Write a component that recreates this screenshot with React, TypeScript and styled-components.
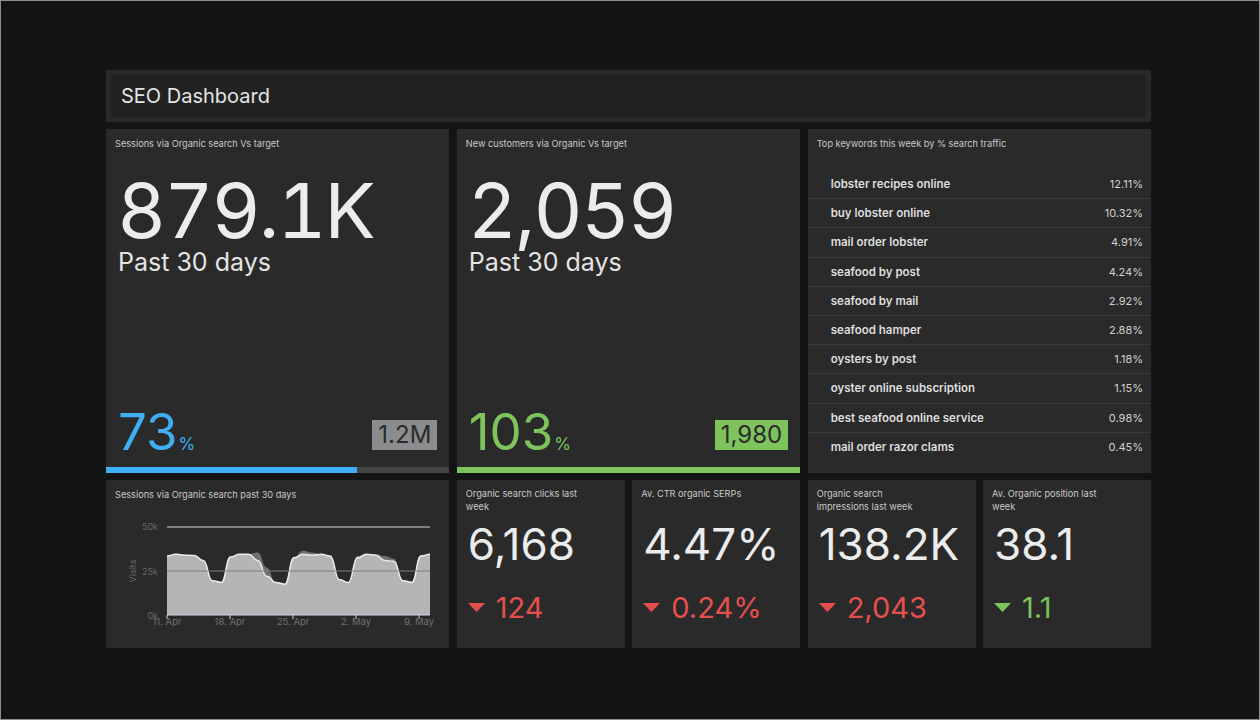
import React from "react";
import styled, { createGlobalStyle } from "styled-components";

const GlobalStyle = createGlobalStyle`
  html, body { margin: 0; padding: 0; background: #131416; }
  body { font-family: Inter, "Noto Sans", "Liberation Sans", sans-serif; }
  * { box-sizing: border-box; }
`;

const Frame = styled.div`
  width: 1260px;
  height: 720px;
  border: 1px solid #8e8e8e;
  background: #131416;
  padding: 69px 0 0 105px;
`;

const Board = styled.div`
  width: 1045px;
  display: grid;
  grid-template-columns: repeat(6, 1fr);
  grid-template-rows: 52px 344px 168px;
  gap: 7px 7.5px;
`;

const Header = styled.div`
  grid-column: 1 / -1;
  background: #292929;
  padding: 5px;
  display: flex;
`;

const HeaderInner = styled.div`
  flex: 1;
  background: #222222;
  display: flex;
  align-items: center;
  padding-left: 10px;
  font-size: 20px;
  color: #e4e4e4;
`;

const Card = styled.div<{ $span: number }>`
  grid-column: span ${(p) => p.$span};
  background: #2a2a2a;
  display: flex;
  flex-direction: column;
  padding-top: 8px;
  overflow: hidden;
`;

const Label = styled.div`
  font-size: 9.2px;
  line-height: 13px;
  color: #c9c9c9;
  padding: 0 9px;
`;

const BigValue = styled.div`
  font-size: 76px;
  line-height: 1;
  margin-top: 22px;
  padding-left: 11px;
  color: #ececec;
  font-variant-numeric: tabular-nums;
  letter-spacing: -2px;
`;

const Sub = styled.div`
  font-size: 25px;
  line-height: 1;
  margin-top: 2px;
  padding-left: 12px;
  color: #e4e4e4;
`;

const Spacer = styled.div`
  flex: 1;
`;

const BottomRow = styled.div`
  display: flex;
  justify-content: space-between;
  align-items: flex-end;
  padding: 0 12px 10px 12px;
`;

const Pct = styled.div<{ $color: string }>`
  font-size: 51px;
  line-height: 1;
  color: ${(p) => p.$color};
  span {
    font-size: 17px;
    margin-left: 1px;
  }
`;

const Badge = styled.div<{ $bg: string }>`
  background: ${(p) => p.$bg};
  color: #2b2b2b;
  font-size: 24px;
  line-height: 30px;
  height: 30px;
  padding: 0 6px;
  margin-bottom: 7px;
`;

const Track = styled.div`
  height: 6px;
  background: #454545;
  display: flex;
`;

const Fill = styled.div<{ $color: string }>`
  height: 100%;
  background: ${(p) => p.$color};
`;

const KeywordList = styled.div`
  margin-top: 20px;
  display: flex;
  flex-direction: column;
`;

const KeywordRow = styled.div`
  height: 29.2px;
  display: flex;
  justify-content: space-between;
  align-items: center;
  padding: 0 8px 0 23px;
  border-bottom: 1px solid #3b3b3b;
  &:last-child {
    border-bottom: none;
  }
`;

const Keyword = styled.span`
  font-size: 11.5px;
  font-weight: 600;
  color: #dedede;
`;

const KeywordValue = styled.span`
  font-size: 11px;
  color: #d0d0d0;
`;

const ChartSvg = styled.svg`
  margin: 3px 0 0 9px;
  display: block;
`;

const SmallTitle = styled.div`
  font-size: 9.2px;
  line-height: 12.5px;
  height: 25px;
  max-width: 124px;
  color: #c9c9c9;
  padding-left: 9px;
`;

const SmallValue = styled.div`
  font-size: 44px;
  line-height: 1;
  margin-top: 9px;
  padding-left: 11px;
  color: #ececec;
`;

const Delta = styled.div<{ $color: string }>`
  display: flex;
  align-items: center;
  gap: 11px;
  margin-top: 27px;
  padding-left: 11px;
  font-size: 29px;
  line-height: 1;
  color: ${(p) => p.$color};
`;

const BLUE = "#3eaff4";
const GREEN = "#7ec35c";
const RED = "#e5504d";

const keywords: [string, string][] = [
  ["lobster recipes online", "12.11%"],
  ["buy lobster online", "10.32%"],
  ["mail order lobster", "4.91%"],
  ["seafood by post", "4.24%"],
  ["seafood by mail", "2.92%"],
  ["seafood hamper", "2.88%"],
  ["oysters by post", "1.18%"],
  ["oyster online subscription", "1.15%"],
  ["best seafood online service", "0.98%"],
  ["mail order razor clams", "0.45%"],
];

const mainData = [
  33.5, 34.5, 34, 33.8, 31, 19.5, 18.5, 33, 34.5, 34.5, 31, 22, 18.5, 17.5, 32.5,
  34.5, 34, 34.5, 33.5, 20, 18.5, 32.5, 34.5, 34, 31, 30.5, 19.5, 18.5, 33.5, 34.5,
];
const backData = [
  33.5, 35, 34, 33.8, 31, 19.5, 18.5, 33, 34.5, 34.5, 35.5, 27, 18.5, 17.5, 33,
  36.5, 35.5, 34.5, 33.5, 20, 18.5, 33.5, 34.5, 34.5, 33.5, 32, 19.5, 18.5, 33.5, 34.5,
];

const X0 = 52;
const DX = 9.07;
const yOf = (v: number) => 111 - (v / 50) * 88;

function linePath(data: number[]) {
  let d = `M ${X0} ${yOf(data[0]).toFixed(2)}`;
  for (let i = 1; i < data.length; i++) {
    const xa = X0 + (i - 1) * DX;
    const xb = X0 + i * DX;
    const ya = yOf(data[i - 1]);
    const yb = yOf(data[i]);
    d += ` C ${(xa + DX / 2).toFixed(2)} ${ya.toFixed(2)}, ${(xb - DX / 2).toFixed(2)} ${yb.toFixed(2)}, ${xb.toFixed(2)} ${yb.toFixed(2)}`;
  }
  return d;
}

function areaPath(data: number[]) {
  const end = X0 + (data.length - 1) * DX;
  return `${linePath(data)} L ${end.toFixed(2)} 111 L ${X0} 111 Z`;
}

const ticks = [
  { x: 52, label: "11. Apr" },
  { x: 115, label: "18. Apr" },
  { x: 178, label: "25. Apr" },
  { x: 241, label: "2. May" },
  { x: 304, label: "9. May" },
];

const Chart = () => (
  <ChartSvg width={326} height={130} viewBox="0 0 326 130">
    <line x1={52} x2={315} y1={23} y2={23} stroke="#d4d4d4" strokeWidth={1} />
    <path d={areaPath(backData)} fill="#6f6f6f" />
    <path d={areaPath(mainData)} fill="#b5b5b5" />
    <path d={linePath(mainData)} fill="none" stroke="#ececec" strokeWidth={1.5} />
    <line x1={52} x2={315} y1={67} y2={67} stroke="#7e7e7e" strokeWidth={1.2} />
    <line x1={52} x2={315} y1={111} y2={111} stroke="#ccd6eb" strokeWidth={1} />
    {ticks.map((t) => (
      <g key={t.label}>
        <line x1={t.x} x2={t.x} y1={111} y2={115} stroke="#ccd6eb" strokeWidth={1} />
        <text x={t.x} y={121} fontSize={9.5} fill="#707070" textAnchor="middle" fontFamily="Inter, sans-serif">
          {t.label}
        </text>
      </g>
    ))}
    <text x={43} y={26} fontSize={9} fill="#686868" textAnchor="end" fontFamily="Inter, sans-serif">50k</text>
    <text x={43} y={71} fontSize={9} fill="#686868" textAnchor="end" fontFamily="Inter, sans-serif">25k</text>
    <text x={43} y={115} fontSize={9} fill="#686868" textAnchor="end" fontFamily="Inter, sans-serif">0k</text>
    <text
      x={0}
      y={0}
      fontSize={9}
      fill="#686868"
      textAnchor="middle"
      fontFamily="Inter, sans-serif"
      transform="translate(21 67) rotate(-90)"
    >
      Visits
    </text>
  </ChartSvg>
);

const Triangle = ({ color }: { color: string }) => (
  <svg width={17} height={9} viewBox="0 0 17 9">
    <polygon points="0,0 17,0 8.5,9" fill={color} />
  </svg>
);

const SmallCard = ({ title, value, delta, color }: { title: string; value: string; delta: string; color: string }) => (
  <Card $span={1}>
    <SmallTitle>{title}</SmallTitle>
    <SmallValue>{value}</SmallValue>
    <Delta $color={color}>
      <Triangle color={color} />
      {delta}
    </Delta>
  </Card>
);

export default function App() {
  return (
    <>
      <GlobalStyle />
      <Frame>
        <Board>
          <Header>
            <HeaderInner>SEO Dashboard</HeaderInner>
          </Header>

          <Card $span={2}>
            <Label>Sessions via Organic search Vs target</Label>
            <BigValue>879.1K</BigValue>
            <Sub>Past 30 days</Sub>
            <Spacer />
            <BottomRow>
              <Pct $color={BLUE}>
                73<span>%</span>
              </Pct>
              <Badge $bg="#8a8c8e">1.2M</Badge>
            </BottomRow>
            <Track>
              <Fill $color={BLUE} style={{ width: "73%" }} />
            </Track>
          </Card>

          <Card $span={2}>
            <Label>New customers via Organic Vs target</Label>
            <BigValue>2,059</BigValue>
            <Sub>Past 30 days</Sub>
            <Spacer />
            <BottomRow>
              <Pct $color={GREEN}>
                103<span>%</span>
              </Pct>
              <Badge $bg={GREEN}>1,980</Badge>
            </BottomRow>
            <Track>
              <Fill $color={GREEN} style={{ width: "100%" }} />
            </Track>
          </Card>

          <Card $span={2}>
            <Label>Top keywords this week by % search traffic</Label>
            <KeywordList>
              {keywords.map(([k, v]) => (
                <KeywordRow key={k}>
                  <Keyword>{k}</Keyword>
                  <KeywordValue>{v}</KeywordValue>
                </KeywordRow>
              ))}
            </KeywordList>
          </Card>

          <Card $span={2}>
            <Label>Sessions via Organic search past 30 days</Label>
            <Chart />
          </Card>

          <SmallCard title="Organic search clicks last week" value="6,168" delta="124" color={RED} />
          <SmallCard title="Av. CTR organic SERPs" value="4.47%" delta="0.24%" color={RED} />
          <SmallCard title="Organic search impressions last week" value="138.2K" delta="2,043" color={RED} />
          <SmallCard title="Av. Organic position last week" value="38.1" delta="1.1" color={GREEN} />
        </Board>
      </Frame>
    </>
  );
}
